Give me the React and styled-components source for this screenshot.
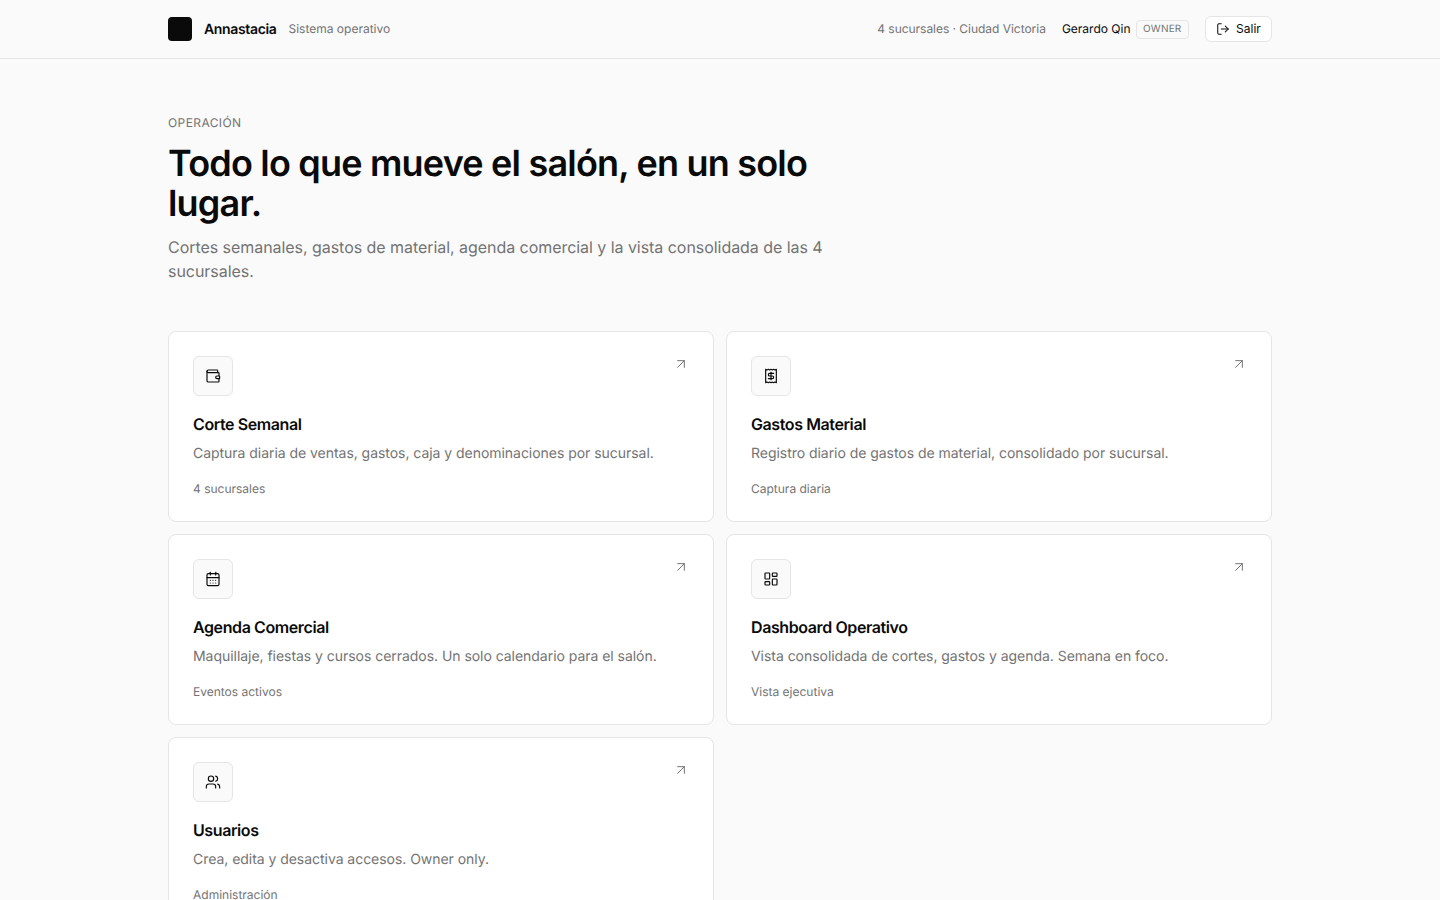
import React from "react";
import styled, { createGlobalStyle } from "styled-components";
import { ArrowUpRight, CalendarDays, LayoutDashboard, LogOut, Receipt, Users, Wallet } from "lucide-react";

const Global = createGlobalStyle`
  * { box-sizing: border-box; }
  html, body { margin: 0; background: #fafafa; }
  body {
    font-family: Inter, "Liberation Sans", sans-serif;
    color: #0a0a0a;
    -webkit-font-smoothing: antialiased;
    text-rendering: geometricPrecision;
  }
`;

const Header = styled.header`
  height: 59px;
  border-bottom: 1px solid #e5e5e5;
  background: #fafafa;
`;
const HeaderInner = styled.div`
  width: 1104px;
  height: 58px;
  margin: 0 auto;
  display: flex;
  align-items: center;
  justify-content: space-between;
`;
const Group = styled.div`
  display: flex;
  align-items: center;
`;
const Logo = styled.div`
  width: 24px;
  height: 24px;
  border-radius: 4px;
  background: #0a0a0a;
  margin-right: 12px;
`;
const Brand = styled.span`
  font-size: 14px;
  line-height: 20px;
  padding-top: 1px;
  font-weight: 600;
  letter-spacing: -0.35px;
  margin-right: 12px;
`;
const Muted = styled.span`
  font-size: 12px;
  line-height: 16px;
  color: #737373;
`;
const Location = styled(Muted)`
  margin-right: 16px;
  letter-spacing: -0.03px;
`;
const UserName = styled.span`
  font-size: 12px;
  line-height: 16px;
  color: #0a0a0a;
  margin-right: 5px;
`;
const RoleBadge = styled.span`
  height: 19px;
  padding: 0 6.5px;
  display: inline-flex;
  align-items: center;
  border: 1px solid #e5e5e5;
  border-radius: 4px;
  font-size: 10px;
  letter-spacing: 0.2px;
  color: #737373;
  margin-right: 16px;
`;
const LogoutButton = styled.button`
  height: 26px;
  width: 67px;
  padding: 0 0 1px;
  display: inline-flex;
  align-items: center;
  justify-content: center;
  gap: 6px;
  border: 1px solid #e5e5e5;
  border-radius: 6px;
  background: #fff;
  font: inherit;
  font-size: 12px;
  color: #0a0a0a;
`;
const Main = styled.main`
  width: 1104px;
  margin: 0 auto;
  padding-top: 56px;
`;
const Eyebrow = styled.div`
  font-size: 12px;
  line-height: 16px;
  letter-spacing: 0.4px;
  font-weight: 400;
  color: #737373;
  margin-bottom: 12px;
`;
const Title = styled.h1`
  margin: 0 0 12px;
  max-width: 672px;
  font-size: 36px;
  line-height: 40px;
  font-weight: 600;
  letter-spacing: -0.8px;
`;
const Lead = styled.p`
  margin: 0 0 48px;
  max-width: 672px;
  font-size: 16px;
  line-height: 24px;
  letter-spacing: -0.048px;
  color: #737373;
`;
const Grid = styled.div`
  display: grid;
  grid-template-columns: 1fr 1fr;
  gap: 12px;
`;
const Card = styled.a`
  position: relative;
  display: block;
  height: 191px;
  padding: 24px;
  border: 1px solid #e5e5e5;
  border-radius: 8px;
  background: #fff;
`;
const IconBox = styled.div`
  width: 40px;
  height: 40px;
  display: flex;
  align-items: center;
  justify-content: center;
  border: 1px solid #e5e5e5;
  border-radius: 6px;
  background: #fafafa;
  margin-bottom: 16px;
`;
const CardTitle = styled.h2`
  margin: 0 0 8px;
  font-size: 16px;
  line-height: 24px;
  font-weight: 600;
  letter-spacing: -0.4px;
`;
const CardText = styled.p`
  margin: 0 0 17px;
  font-size: 14px;
  line-height: 20px;
  letter-spacing: -0.04px;
  color: #737373;
`;
const CardMeta = styled.div`
  font-size: 12px;
  line-height: 16px;
  color: #737373;
`;
const Corner = styled.span`
  position: absolute;
  top: 24px;
  right: 24px;
  display: flex;
  color: #737373;
`;

const items = [
  { icon: Wallet, title: "Corte Semanal", text: "Captura diaria de ventas, gastos, caja y denominaciones por sucursal.", meta: "4 sucursales" },
  { icon: Receipt, title: "Gastos Material", text: "Registro diario de gastos de material, consolidado por sucursal.", meta: "Captura diaria" },
  { icon: CalendarDays, title: "Agenda Comercial", text: "Maquillaje, fiestas y cursos cerrados. Un solo calendario para el salón.", meta: "Eventos activos" },
  { icon: LayoutDashboard, title: "Dashboard Operativo", text: "Vista consolidada de cortes, gastos y agenda. Semana en foco.", meta: "Vista ejecutiva" },
  { icon: Users, title: "Usuarios", text: "Crea, edita y desactiva accesos. Owner only.", meta: "Administración" },
];

export default function App() {
  return (
    <>
      <Global />
      <Header>
        <HeaderInner>
          <Group>
            <Logo />
            <Brand>Annastacia</Brand>
            <Muted>Sistema operativo</Muted>
          </Group>
          <Group>
            <Location>4 sucursales · Ciudad Victoria</Location>
            <UserName>Gerardo Qin</UserName>
            <RoleBadge>OWNER</RoleBadge>
            <LogoutButton><LogOut size={14} strokeWidth={1.75} />Salir</LogoutButton>
          </Group>
        </HeaderInner>
      </Header>
      <Main>
        <Eyebrow>OPERACIÓN</Eyebrow>
        <Title>Todo lo que mueve el salón, en un solo lugar.</Title>
        <Lead>Cortes semanales, gastos de material, agenda comercial y la vista consolidada de las 4 sucursales.</Lead>
        <Grid>
          {items.map(({ icon: Icon, title, text, meta }) => (
            <Card key={title}>
              <IconBox><Icon size={16} strokeWidth={1.75} /></IconBox>
              <Corner><ArrowUpRight size={16} strokeWidth={1.5} /></Corner>
              <CardTitle>{title}</CardTitle>
              <CardText>{text}</CardText>
              <CardMeta>{meta}</CardMeta>
            </Card>
          ))}
        </Grid>
      </Main>
    </>
  );
}
